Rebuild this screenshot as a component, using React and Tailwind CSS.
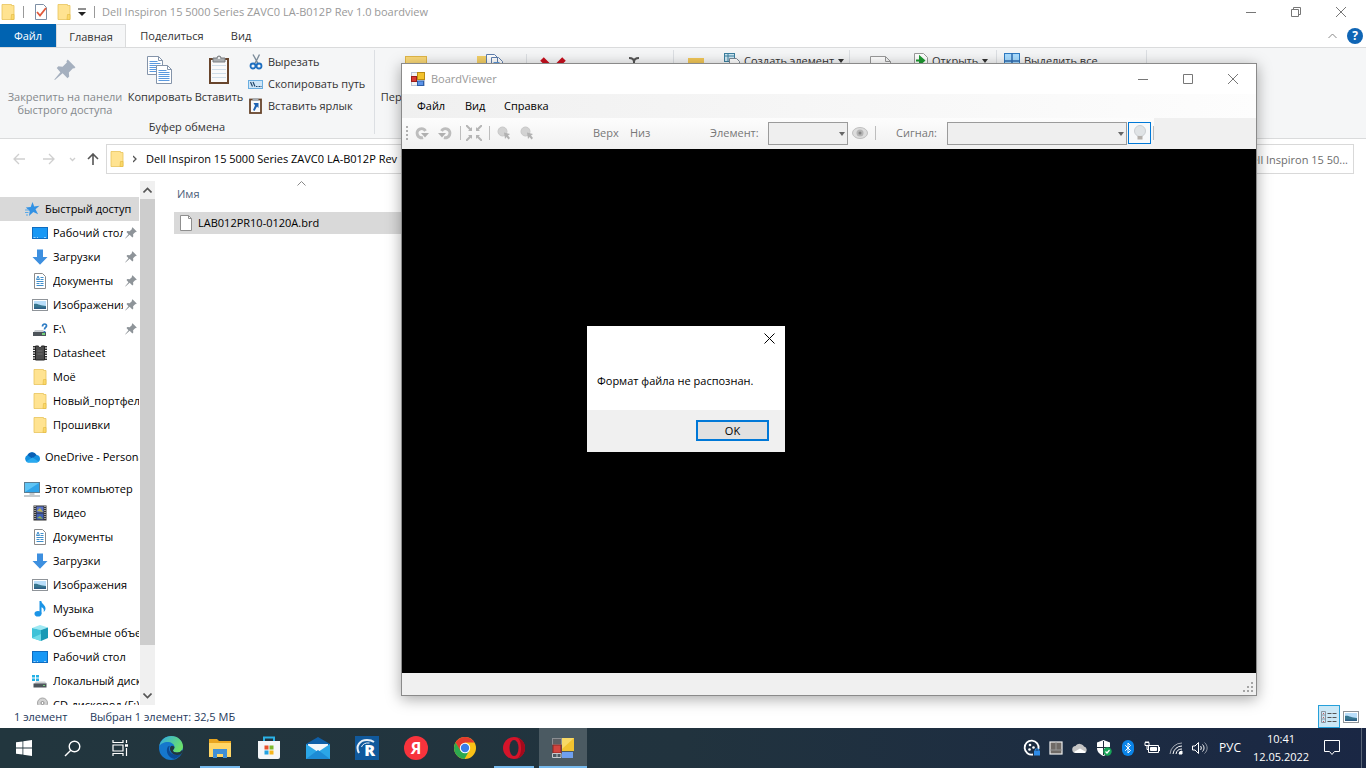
import { LuBluetooth } from "react-icons/lu";

/* ---------- file and folder icons ---------- */

const FolderIcon = () => (
  <svg width="16" height="16" viewBox="0 0 16 16">
    <path d="M2 .5h9.500v1H14v14H2z" fill="#ffe391" stroke="#e8c45c" strokeWidth=".8" />
    <path d="M11.500 10.500h2.500v5h-3z" fill="#fbd869" stroke="#e3b93f" strokeWidth=".6" />
  </svg>
);

const StarIcon = () => (
  <svg width="16" height="16" viewBox="0 0 16 16">
    <path d="M8.500 1l1.700 4.400 5.300-.6-4 3.500 2.600 5-4.800-2.300L5 15l.7-4.900-3.900-3.500 4.900-.6z" fill="#3191e4" />
    <path d="M1 9h4M1 11.500h3.500M2 14h2" stroke="#5aa9e8" strokeWidth="1" />
  </svg>
);

const DesktopIcon = () => (
  <svg width="16" height="16" viewBox="0 0 16 16">
    <rect x=".5" y="2.500" width="15" height="11" fill="#1898f5" stroke="#0f6cc0" />
    <path d="M1.500 12.500h2M5 12.500h1M12 12.500h2" stroke="#9fd0f8" />
  </svg>
);

const DownloadIcon = () => (
  <svg width="16" height="16" viewBox="0 0 16 16">
    <path d="M5 .5h6V8h4.500L8 15.800.5 8H5z" fill="#3d8fdf" />
  </svg>
);

const DocumentIcon = () => (
  <svg width="16" height="16" viewBox="0 0 16 16">
    <path d="M2.500.5h8l3 3v12h-11z" fill="#fff" stroke="#8a8a8a" />
    <path d="M8.500 4.500h3M8.500 6.500h3M4.500 8.500h7M4.500 10.500h3M8.500 10.500h3M4.500 12.500h7" stroke="#3f8ecb" />
    <path d="M4.500 6.500L6 3l1.500 3.500z" fill="none" stroke="#3f8ecb" />
  </svg>
);

const PictureIcon = () => (
  <svg width="16" height="16" viewBox="0 0 16 16">
    <rect x=".5" y="2.500" width="15" height="11" fill="#fff" stroke="#8f9499" />
    <rect x="2" y="4" width="12" height="8" fill="#b9defa" />
    <path d="M2 7c3-1 6 2 12 2v3H2z" fill="#37768f" />
    <path d="M2 10.500h12V12H2z" fill="#2d5d85" />
  </svg>
);

const UnknownDriveIcon = () => (
  <svg width="16" height="16" viewBox="0 0 16 16">
    <path d="M3 9h8l3 3H1z" fill="#c9cdd1" />
    <rect x="1" y="11" width="13" height="4" fill="#4e555b" />
    <rect x="10" y="12" width="3" height="2" fill="#74d27a" />
    <path d="M10.500 5.500c0-3.500 4.500-3 4-.5-.3 1.500-2 1.500-2 3.500M12.500 10v1.500" fill="none" stroke="#2d7cc4" strokeWidth="1.700" />
  </svg>
);

const ChipIcon = () => (
  <svg width="16" height="16" viewBox="0 0 16 16">
    <path d="M2.500 1v14M13.500 1v14" stroke="#333" strokeWidth="3" strokeDasharray="1.500 1" />
    <path d="M3.500 1h3c0 2 3 2 3 0h3v14h-9z" fill="#4c4c4c" stroke="#222" />
    <path d="M5.500 6h5M5.500 9h5" stroke="#6d6d6d" />
  </svg>
);

const CloudIcon = () => (
  <svg width="16" height="16" viewBox="0 0 16 16">
    <path d="M4 13.500a4 4 0 01-.5-7.500A5 5 0 0112.500 6a3.800 3.800 0 01.5 7.500z" fill="#1490df" />
    <path d="M3.500 6A5 5 0 0112.500 6L8 9.500z" fill="#0a5fb4" />
    <path d="M2 12.500l6.500-4 6 4a3.500 3.500 0 01-1.500 1H4a4 4 0 01-2-1z" fill="#29aaf0" />
  </svg>
);

const ComputerIcon = () => (
  <svg width="16" height="16" viewBox="0 0 16 16">
    <rect x=".5" y="1.500" width="15" height="10" fill="#5ec4f5" stroke="#5b7d92" />
    <path d="M1 11L15 2v9z" fill="#2fa4ea" />
    <path d="M5.500 13h5M0 15h16" stroke="#8c969c" />
  </svg>
);

const VideoIcon = () => (
  <svg width="16" height="16" viewBox="0 0 16 16">
    <rect x="1.500" y=".5" width="13" height="15" fill="#333" />
    <path d="M3 1v14M13 1v14" stroke="#ddd" strokeWidth="1.200" strokeDasharray="1 1" />
    <rect x="4.500" y="1.500" width="7" height="6" fill="#5b74c9" />
    <rect x="4.500" y="8.500" width="7" height="6" fill="#3f5fb5" />
    <path d="M5 6l3-3 3 4z" fill="#c2b84b" />
    <path d="M5 13l3-2 3 3z" fill="#8fb04b" />
  </svg>
);

const MusicIcon = () => (
  <svg width="16" height="16" viewBox="0 0 16 16">
    <ellipse cx="6" cy="12.800" rx="3.500" ry="2.800" fill="#1b94e6" />
    <path d="M7.500 0h1.800c.3 3 4.200 4 4.200 7.500 0 1.500-.7 2.800-1.800 3.500.7-3-.7-4.200-2.200-4.700v6.500h-2z" fill="#1b94e6" />
  </svg>
);

const CubeIcon = () => (
  <svg width="16" height="16" viewBox="0 0 16 16">
    <path d="M8 0l8 2.500L9 5 0 3z" fill="#9fe9f3" />
    <path d="M0 3l9 2v11l-9-3z" fill="#3ec2d8" />
    <path d="M0 13l9-4v7z" fill="#6fdbe8" />
    <path d="M16 2.500L9 5v11l7-3z" fill="#1899b5" />
  </svg>
);

const LocalDriveIcon = () => (
  <svg width="16" height="16" viewBox="0 0 16 16">
    <path d="M0 2h3v2.500H0zM4 2h3v2.500H4zM0 5.500h3V8H0zM4 5.500h3V8H4z" fill="#23b1e6" />
    <path d="M4 8.500h9l2 2.500H2z" fill="#c9cdd1" />
    <rect x="1.500" y="10.500" width="13" height="4" fill="#4e555b" />
    <rect x="11" y="12" width="2" height="1" fill="#74d27a" />
  </svg>
);

const DiscIcon = () => (
  <svg width="16" height="16" viewBox="0 0 16 16">
    <circle cx="10.500" cy="6" r="5" fill="#d2d2d2" stroke="#a5a5a5" />
    <circle cx="10.500" cy="6" r="1.500" fill="#fff" stroke="#8c8c8c" />
    <rect x="1" y="11" width="13" height="4" fill="#4e555b" />
  </svg>
);

const PinIcon = ({ size = 12, color = "#8e9499" }) => (
  <svg width={size} height={size} viewBox="0 0 20 20">
    <path d="M12.500.5l7 7-1.200 1.200-1-.4-3.800 3.900.3 3.800-1.500 1.500-4.500-4.500L.8 19.200l-.5-.5L5.800 12 2.500 8.200 4 6.700l3.800.4 3.900-3.900-.4-1.200z" fill={color} />
  </svg>
);

const PageIcon = () => (
  <svg width="12" height="16" viewBox="0 0 12 16">
    <path d="M.5.500h8l3 3v12H.5z" fill="#fff" stroke="#8f8f8f" />
    <path d="M8.500.5v3h3" fill="none" stroke="#8f8f8f" />
  </svg>
);

const FormIcon = () => (
  <svg width="14" height="14" viewBox="0 0 14 14">
    <rect x=".5" y=".5" width="13" height="13" fill="#f3f3f3" stroke="#b9c4d6" />
    <rect x="6.500" y=".5" width="7" height="7" fill="#f3c22c" stroke="#b98b12" />
    <rect x=".5" y="4.500" width="5" height="5" fill="#d83a34" stroke="#9c1d19" />
    <rect x="6.500" y="9" width="6" height="4.500" fill="#5d94e8" stroke="#2c5ea8" />
  </svg>
);

/* ---------- ribbon icons ---------- */

const Sheet = ({ x, y }) => (
  <g transform={`translate(${x} ${y})`}>
    <path d="M.5.5h11l4 4v14H.5z" fill="#fff" stroke="#8494aa" />
    <path d="M11.500.5v4h4" fill="none" stroke="#8494aa" />
    <path d="M2.500 5.500h8M2.500 7.500h11M2.500 9.500h11M2.500 11.500h11M2.500 13.500h11M2.500 15.500h11" stroke="#5c9adf" />
  </g>
);

const CopyIcon = () => (
  <svg width="26" height="28" viewBox="0 0 26 28">
    <Sheet x={0} y={0} />
    <Sheet x={9} y={9} />
  </svg>
);

const PasteIcon = () => (
  <svg width="22" height="30" viewBox="0 0 22 30">
    <rect x="2" y="4" width="18" height="24" fill="#fafafa" stroke="#68452c" strokeWidth="2" />
    <path d="M4 10.500h14M4 14.500h14M4 18.500h14M4 22.500h14" stroke="#cfdde8" />
    <path d="M5 7V3h4a2 2 0 014 0h4v4z" fill="#a9adb0" stroke="#7b7f82" />
    <circle cx="11" cy="3" r="1" fill="#fff" />
  </svg>
);

const CutIcon = () => (
  <svg width="16" height="16" viewBox="0 0 16 16">
    <path d="M5 .5l5 9M11.500.5L7 9.500" stroke="#7c8c9a" strokeWidth="1.400" fill="none" />
    <circle cx="5" cy="12" r="2.500" fill="none" stroke="#1f6fc0" strokeWidth="1.800" />
    <circle cx="11" cy="12" r="2.500" fill="none" stroke="#1f6fc0" strokeWidth="1.800" />
  </svg>
);

const PathIcon = () => (
  <svg width="16" height="16" viewBox="0 0 16 16">
    <rect x=".5" y="4.500" width="14" height="8" fill="#cfe6f8" stroke="#6aaee0" />
    <path d="M2.500 6l2 4.500M5 6l2 4.500M8 10.500h1.500M10.500 10.500H12M12.500 10.500h1" stroke="#24486b" strokeWidth="1.200" />
  </svg>
);

const ShortcutIcon = () => (
  <svg width="16" height="16" viewBox="0 0 16 16">
    <rect x="2" y="1.500" width="11" height="13.500" fill="#fafafa" stroke="#68452c" strokeWidth="1.800" />
    <rect x="4.500" y="0" width="6" height="3" fill="#a9adb0" />
    <path d="M5.500 5h5v5L9 8.500 6.500 13 5 12l2-4.500z" fill="#1f64b4" />
  </svg>
);

const NewItemIcon = () => (
  <svg width="16" height="16" viewBox="0 0 16 16">
    <rect x=".5" y=".5" width="10" height="8" fill="#cfe9f5" stroke="#3b7f9e" />
    <path d="M1 3h9M4 1v7" stroke="#3b7f9e" />
    <path d="M5.500 5.500h7l3 3v7h-10z" fill="#fff" stroke="#7a8794" />
  </svg>
);

const OpenIcon = () => (
  <svg width="14" height="16" viewBox="0 0 14 16">
    <path d="M.5.500h9l4 4v11H.5z" fill="#fff" stroke="#9a9a9a" />
    <path d="M2 7.500h5M6 4l4 3.500L6 11z" stroke="#1e9a32" strokeWidth="2" fill="#1e9a32" />
  </svg>
);

const SelectAllIcon = () => (
  <svg width="16" height="16" viewBox="0 0 16 16">
    <rect x=".5" y=".5" width="15" height="15" fill="#a8dcff" stroke="#2f7cc4" />
    <path d="M8 0v16M0 8h16" stroke="#2f6db4" strokeWidth="1.500" />
  </svg>
);

const CaretIcon = () => (
  <svg width="6" height="4" viewBox="0 0 6 4"><path d="M0 0h6L3 4z" fill="#333" /></svg>
);

const HelpIcon = () => (
  <span className="flex size-4 items-center justify-center rounded-full bg-[#0f65b5] text-xs font-bold text-white">?</span>
);

/* ---------- window controls ---------- */

const CaptionButtons = ({ restored = false }) => (
  <div className="flex gap-[33px] text-[#777]">
    <button aria-label="Свернуть">
      <svg width="12" height="12" viewBox="0 0 12 12"><path d="M1 6.500h10" stroke="currentColor" /></svg>
    </button>
    <button aria-label="Развернуть">
      <svg width="12" height="12" viewBox="0 0 12 12" fill="none" stroke="currentColor">
        {restored ? <path d="M1.500 3.500h7v7h-7zM3.500 3.500v-2h7v7h-2" /> : <path d="M1.500 1.500h9v9h-9z" />}
      </svg>
    </button>
    <button aria-label="Закрыть">
      <svg width="12" height="12" viewBox="0 0 12 12"><path d="M1 1l10 10M11 1L1 11" stroke="currentColor" /></svg>
    </button>
  </div>
);

/* ---------- explorer ---------- */

const quickAccess = [
  { icon: <DesktopIcon />, label: "Рабочий стол", pinned: true },
  { icon: <DownloadIcon />, label: "Загрузки", pinned: true },
  { icon: <DocumentIcon />, label: "Документы", pinned: true },
  { icon: <PictureIcon />, label: "Изображения", pinned: true },
  { icon: <UnknownDriveIcon />, label: "F:\\", pinned: true },
  { icon: <ChipIcon />, label: "Datasheet" },
  { icon: <FolderIcon />, label: "Моё" },
  { icon: <FolderIcon />, label: "Новый_портфель" },
  { icon: <FolderIcon />, label: "Прошивки" },
];

const thisPc = [
  { icon: <VideoIcon />, label: "Видео" },
  { icon: <DocumentIcon />, label: "Документы" },
  { icon: <DownloadIcon />, label: "Загрузки" },
  { icon: <PictureIcon />, label: "Изображения" },
  { icon: <MusicIcon />, label: "Музыка" },
  { icon: <CubeIcon />, label: "Объемные объекты" },
  { icon: <DesktopIcon />, label: "Рабочий стол" },
  { icon: <LocalDriveIcon />, label: "Локальный диск" },
  { icon: <DiscIcon />, label: "CD-дисковод (F:)" },
];

const TreeItem = ({ icon, label, pinned, root, active }) => (
  <li>
    <a
      href="#"
      className={`flex h-6 items-center gap-[5px] whitespace-nowrap ${root ? "pl-6" : "pl-8"} ${active ? "bg-[#d9d9d9]" : ""}`}
    >
      <span className="shrink-0">{icon}</span>
      <span className={`flex-1 overflow-hidden ${pinned ? "-mr-[3px]" : ""}`}>{label}</span>
      {pinned && <span className="mr-[2px] shrink-0"><PinIcon /></span>}
    </a>
  </li>
);

const BigButton = ({ icon, children, className = "" }) => (
  <button className={`flex flex-col items-center leading-[13px] whitespace-nowrap ${className}`}>
    <span className="flex h-9 items-center justify-center pb-1">{icon}</span>
    <span>{children}</span>
  </button>
);

const SmallButton = ({ icon, children }) => (
  <button className="flex h-[22px] items-center gap-1 whitespace-nowrap">
    {icon}
    {children}
  </button>
);

const Group = ({ children, className = "" }) => (
  <div className={`mt-0.5 mb-1 flex border-r border-[#dcdfe3] ${className}`}>{children}</div>
);

const Ribbon = () => (
  <div className="flex h-[92px] shrink-0 border-y border-[#dadbdc] bg-[#f5f6f7] text-[#333]">
    <Group className="w-[375px] flex-col">
      <div className="flex pt-1">
        <BigButton className="w-[130px] text-[#85898d]" icon={<PinIcon size={22} color="#a5b0bf" />}>
          Закрепить на панели<br />быстрого доступа
        </BigButton>
        <BigButton className="w-[60px]" icon={<CopyIcon />}>Копировать</BigButton>
        <BigButton className="w-[58px]" icon={<PasteIcon />}>Вставить</BigButton>
        <div className="-mt-[3px]">
          <SmallButton icon={<CutIcon />}>Вырезать</SmallButton>
          <SmallButton icon={<PathIcon />}>Скопировать путь</SmallButton>
          <SmallButton icon={<ShortcutIcon />}>Вставить ярлык</SmallButton>
        </div>
      </div>
      <div className="mt-auto text-center leading-[14px]">Буфер обмена</div>
    </Group>
    <Group className="w-[299px] items-start pt-1">
      <BigButton
        className="w-[82px]"
        icon={<svg width="22" height="28"><rect x=".5" y=".5" width="21" height="27" fill="#fbd978" stroke="#e0b648" /></svg>}
      >
        Переместить
      </BigButton>
      <button className="ml-5" aria-label="Копировать в">
        <svg width="26" height="28" viewBox="0 0 26 28">
          <rect x="0" y="2" width="13" height="26" fill="#f3cf66" />
          <path d="M9.500.5h8l3 3v10h-11zM14.500 3.500h7l4 4v10h-11z" fill="#fff" stroke="#5f7fae" />
          <path d="M16.500 8.500h6M16.500 10.500h7" stroke="#5c9adf" />
        </svg>
      </button>
      <span className="ml-[23px] h-20 w-px bg-[#dcdfe3]" />
      <button className="ml-3 pt-px" aria-label="Удалить">
        <svg width="28" height="28" viewBox="0 0 28 28"><path d="M3 4l20 20M25 4L5 24" stroke="#c8101e" strokeWidth="5" /></svg>
      </button>
      <button className="ml-[62px] pt-0.5" aria-label="Переименовать">
        <svg width="10" height="28" viewBox="0 0 10 28"><path d="M0 2c3 0 5 1 5 4 0-3 2-4 5-4M5 6v20" fill="none" stroke="#555" strokeWidth="2" /></svg>
      </button>
    </Group>
    <Group className="w-[176px] items-start">
      <button className="ml-[14px] pt-2" aria-label="Новая папка">
        <svg width="16" height="28"><rect width="16" height="28" fill="#f2c758" /></svg>
      </button>
      <div className="ml-5">
        <SmallButton icon={<NewItemIcon />}>
          Создать элемент <CaretIcon />
        </SmallButton>
      </div>
    </Group>
    <Group className="w-[147px] items-start">
      <button className="ml-5 pt-[5px]" aria-label="Свойства">
        <svg width="22" height="28"><path d="M.5 1.500h15l5 5v21H.5zM15.500 1.500v5h5" fill="#fff" stroke="#999" /></svg>
      </button>
      <div className="ml-[22px]">
        <SmallButton icon={<OpenIcon />}>
          Открыть <CaretIcon />
        </SmallButton>
      </div>
    </Group>
    <Group className="w-[150px] items-start">
      <div className="ml-[7px]">
        <SmallButton icon={<SelectAllIcon />}>Выделить все</SmallButton>
      </div>
    </Group>
  </div>
);

const Explorer = () => (
  <section className="flex min-h-0 flex-1 flex-col bg-white">
    <header className="flex h-6 shrink-0 items-center pr-[19px]">
      <FolderIcon />
      <span className="ml-[7px] h-3 w-px bg-[#999]" />
      <svg className="ml-[10px]" width="14" height="16" viewBox="0 0 14 16">
        <path d="M1.500.5h8l3 3v12h-11z" fill="#fff" stroke="#7d8fa5" />
        <path d="M3 8l3 3.500L12 4" fill="none" stroke="#e0593b" strokeWidth="1.800" />
      </svg>
      <span className="ml-2"><FolderIcon /></span>
      <svg className="ml-[6px]" width="8" height="8" viewBox="0 0 8 8"><path d="M0 1h8" stroke="#222" /><path d="M0 4h8L4 8z" fill="#222" /></svg>
      <span className="ml-2 h-3 w-px bg-[#999]" />
      <h1 className="ml-[7px] flex-1 text-[#999]">Dell Inspiron 15 5000 Series ZAVC0 LA-B012P Rev 1.0 boardview</h1>
      <CaptionButtons restored />
    </header>

    <nav className="flex h-[23px] shrink-0 items-center text-[#333]">
      <button className="h-full w-14 bg-[#0063b1] text-white">Файл</button>
      <button className="-mb-px h-6 w-[70px] border border-b-0 border-[#dadbdc] bg-[#f5f6f7]">Главная</button>
      <button className="w-[92px]">Поделиться</button>
      <button className="w-[46px]">Вид</button>
      <span className="flex-1" />
      <svg width="9" height="6" viewBox="0 0 9 6"><path d="M.5 5L4.500 1l4 4" fill="none" stroke="#888" /></svg>
      <button className="mr-[3px] ml-[10px]" aria-label="Справка"><HelpIcon /></button>
    </nav>

    <Ribbon />

    <div className="flex h-[42px] shrink-0 items-center px-3 pb-[2px]">
      <svg width="90" height="12" viewBox="0 0 90 12" fill="none" strokeWidth="1.300">
        <path d="M13 6H2M7 1L2 6l5 5M31 6h11M37 1l5 5-5 5M58 5l2.500 2.500L63 5" stroke="#cfcfcf" />
        <path d="M81 12V1M76 6l5-5 5 5" stroke="#555" strokeWidth="1.600" />
      </svg>
      <div className="ml-1 flex h-[30px] flex-1 items-center border border-[#d9d9d9] pl-[2px]">
        <FolderIcon />
        <svg className="mr-[9px] ml-2" width="4" height="8" viewBox="0 0 4 8"><path d="M0 1l3 3-3 3" fill="none" stroke="#555" strokeWidth="1.300" /></svg>
        <span className="text-black">Dell Inspiron 15 5000 Series ZAVC0 LA-B012P Rev 1.0 boardview</span>
      </div>
      <input
        aria-label="Поиск"
        placeholder="Поиск: Dell Inspiron 15 50..."
        className="ml-3 h-[30px] w-[210px] border border-[#d9d9d9] pr-[5px] text-right placeholder:text-[#6d6d6d]"
      />
    </div>

    <div className="flex min-h-0 flex-1 text-black">
      <ul className="w-[139px] overflow-hidden pt-4">
        <TreeItem root active icon={<StarIcon />} label="Быстрый доступ" />
        {quickAccess.map((item) => <TreeItem key={item.label} {...item} />)}
        <li className="h-2" />
        <TreeItem root icon={<CloudIcon />} label="OneDrive - Personal" />
        <li className="h-2" />
        <TreeItem root icon={<ComputerIcon />} label="Этот компьютер" />
        {thisPc.map((item) => <TreeItem key={item.label} {...item} />)}
      </ul>
      <div className="ml-px flex w-[15px] flex-col items-center bg-[#f0f0f0]">
        <svg className="my-[6px]" width="9" height="6" viewBox="0 0 9 6"><path d="M.5 5.500l4-4 4 4" fill="none" stroke="#555" strokeWidth="1.600" /></svg>
        <div className="w-full flex-[449] bg-[#cdcdcd]" />
        <div className="flex-[42]" />
        <svg className="my-[6px]" width="9" height="6" viewBox="0 0 9 6"><path d="M.5.5l4 4 4-4" fill="none" stroke="#555" strokeWidth="1.600" /></svg>
      </div>
      <div className="flex-1 pl-[19px]">
        <div className="h-[31px] w-[255px] text-center">
          <svg className="mx-auto block" width="9" height="5" viewBox="0 0 9 5"><path d="M.5 4.500l4-4 4 4" fill="none" stroke="#888" /></svg>
          <div className="pl-[3px] text-left leading-4 text-[#4c607a]">Имя</div>
        </div>
        <a href="#" className="flex h-[22px] w-[640px] items-center gap-[6px] bg-[#d9d9d9] pl-[6px]">
          <PageIcon />
          LAB012PR10-0120A.brd
        </a>
      </div>
    </div>

    <footer className="flex h-[23px] shrink-0 items-center pr-[7px] pl-[14px] text-[#1e395b]">
      <span className="w-[76px]">1 элемент</span>
      <span className="flex-1">Выбран 1 элемент: 32,5 МБ</span>
      <button className="flex h-[23px] w-[22px] items-center justify-center border border-[#26a0da] bg-[#cbe8f6]" aria-label="Таблица">
        <svg width="16" height="12" viewBox="0 0 16 12" fill="none">
          <path d="M.5.5h4v11h-4zM.5 4h4M.5 8h4" stroke="#8a96a0" />
          <path d="M6.500 2.500h4M11.500 2.500h4M6.500 6.500h4M11.500 6.500h4M6.500 10.500h4M11.500 10.500h4" stroke="#555" />
          <path d="M2 2.500h1M2 6.500h1M2 10.500h1" stroke="#c55" />
        </svg>
      </button>
      <button className="ml-[3px]" aria-label="Крупные значки"><PictureIcon /></button>
    </footer>
  </section>
);

/* ---------- BoardViewer ---------- */

const RotateIcon = ({ flip }) => (
  <svg width="14" height="14" viewBox="0 0 14 14">
    <g transform={flip ? "translate(14 0) scale(-1 1)" : undefined}>
      <path d="M8 11.500A4.500 4.500 0 1110.500 5" fill="none" stroke="#bdbdbd" strokeWidth="3" />
      <path d="M6 7h8l-4 4.500z" fill="#b0b0b0" />
    </g>
  </svg>
);

const ZoomIcon = () => (
  <svg width="14" height="14" viewBox="0 0 14 14">
    <circle cx="5.500" cy="5.500" r="4.500" fill="#d2d2d2" stroke="#c8c8c8" />
    <path d="M7 6.500l6 1.500-2 1.500 2 2.500-1.500 1.500-2-2.500L8 13z" fill="#b2b2b2" />
  </svg>
);

const Combo = ({ label, id, labelClass, className }) => (
  <>
    <label htmlFor={id} className={labelClass}>{label}</label>
    <div className={`relative ${className}`}>
      <select id={id} disabled className="block h-[23px] w-full appearance-none border border-[#9b9b9b] bg-[#efefef]" />
      <svg className="pointer-events-none absolute top-[10px] right-[3px]" width="6" height="4"><path d="M0 0h6L3 4z" fill="#666" /></svg>
    </div>
  </>
);

const Divider = ({ className = "" }) => <span className={`h-[14px] w-px bg-[#bdbdbd] ${className}`} />;

const BoardViewer = () => (
  <section className="absolute top-[63px] left-[401px] flex h-[633px] w-[856px] flex-col border border-[#8a8a8a] bg-white shadow-[0_3px_14px_rgba(0,0,0,0.35)]">
    <header className="flex h-[30px] shrink-0 items-center pr-[17px] pl-[9px]">
      <FormIcon />
      <h2 className="ml-[6px] flex-1 text-[#999]">BoardViewer</h2>
      <CaptionButtons />
    </header>
    <nav className="flex h-6 shrink-0 items-center bg-linear-to-r from-[#f0f0f0] to-[#fdfdfd] pl-[15px] text-black">
      <button className="w-12 text-left">Файл</button>
      <button className="w-[39px] text-left">Вид</button>
      <button>Справка</button>
    </nav>
    <div className="flex h-[31px] shrink-0 bg-[#f0f0f0] text-[#777]">
      <div className="flex h-full w-[752px] items-center bg-linear-to-b from-[#fdfdfd] to-[#f0f0f0] pb-px pl-1">
        <svg width="2" height="14"><path d="M1 0v14" stroke="#b0b0b0" strokeWidth="2" strokeDasharray="2 2" /></svg>
        <button className="ml-[7px]" aria-label="Повернуть влево"><RotateIcon /></button>
        <button className="ml-[9px]" aria-label="Повернуть вправо"><RotateIcon flip /></button>
        <Divider className="ml-2" />
        <button className="ml-[5px]" aria-label="Вписать">
          <svg width="16" height="16" viewBox="0 0 16 16">
            <path d="M0 0l5 5M16 0l-5 5M0 16l5-5M16 16l-5-5" stroke="#b5b5b5" strokeWidth="2" />
            <path d="M6 2v4H2zM10 2v4h4zM6 14v-4H2zM10 14v-4h4z" fill="#b5b5b5" />
          </svg>
        </button>
        <Divider className="ml-[7px]" />
        <button className="ml-[7px]" aria-label="Увеличить"><ZoomIcon /></button>
        <button className="ml-[9px]" aria-label="Уменьшить"><ZoomIcon /></button>
        <button className="ml-[59px] w-[37px] text-left">Верх</button>
        <button className="w-20 text-left">Низ</button>
        <Combo id="element" label="Элемент:" labelClass="w-[58px] shrink-0" className="w-20" />
        <button className="ml-1" aria-label="Показать">
          <svg width="16" height="12" viewBox="0 0 16 12">
            <ellipse cx="8" cy="6" rx="7.500" ry="5.500" fill="#dcdcdc" stroke="#bfbfbf" />
            <circle cx="8" cy="6" r="3.500" fill="#b5b5b5" />
            <circle cx="8" cy="6" r="1.500" fill="#858585" />
          </svg>
        </button>
        <Divider className="ml-[7px]" />
        <Combo id="signal" label="Сигнал:" labelClass="ml-5 w-[51px] shrink-0" className="w-[180px]" />
        <button className="ml-px flex h-[22px] w-[23px] items-center justify-center border border-[#0078d7] bg-[#f6f8fa]" aria-label="Подсветка">
          <svg width="14" height="16" viewBox="0 0 14 16">
            <circle cx="7" cy="6" r="5.500" fill="#dfe3e6" stroke="#cbcfd3" />
            <path d="M4.500 11h5v3.500h-5z" fill="#b4b0ac" />
          </svg>
        </button>
        <Divider className="ml-[2px]" />
      </div>
    </div>
    <main className="flex-1 bg-black" />
    <footer className="flex h-[22px] shrink-0 items-end justify-end bg-[#f0f0f0] p-[3px]">
      <svg width="10" height="10" fill="#a5a5a5"><path d="M8 0h2v2H8zM4 4h2v2H4zM8 4h2v2H8zM0 8h2v2H0zM4 8h2v2H4zM8 8h2v2H8z" /></svg>
    </footer>
  </section>
);

const ErrorDialog = () => (
  <div role="alertdialog" className="absolute top-[326px] left-[587px] flex h-[126px] w-[198px] flex-col bg-white text-black">
    <button className="mt-[7px] mr-[10px] self-end" aria-label="Закрыть">
      <svg width="11" height="11" viewBox="0 0 11 11"><path d="M.5.5l10 10M10.500.5l-10 10" stroke="#000" /></svg>
    </button>
    <p className="mt-[29px] pl-[10px] whitespace-nowrap">Формат файла не распознан.</p>
    <div className="mt-auto flex h-[42px] items-center justify-end bg-[#f0f0f0] pr-4 pb-px">
      <button className="h-[21px] w-[73px] border-2 border-[#0078d7] bg-[#e1e1e1]">OK</button>
    </div>
  </div>
);

/* ---------- taskbar ---------- */

const StartIcon = () => (
  <svg width="16" height="16" viewBox="0 0 16 16" fill="#fff">
    <path d="M0 2.300l6.500-.9v6.100H0zM7.300 1.300L16 0v7.500H7.300zM0 8.400h6.500v6.200L0 13.700zM7.300 8.400H16V16l-8.700-1.200z" />
  </svg>
);

const SearchIcon = () => (
  <svg width="17" height="17" viewBox="0 0 17 17" fill="none" stroke="#fff" strokeWidth="1.400">
    <circle cx="10.500" cy="6.500" r="5.300" />
    <path d="M6.800 10.300L1 16" />
  </svg>
);

const TaskViewIcon = () => (
  <svg width="17" height="16" viewBox="0 0 17 16" fill="none" stroke="#fff" strokeWidth="1.200">
    <path d="M1 0v2.500h10V0M1 5h10v6H1zM1 16v-2.500h10V16M14.500 0v3M14.500 8v8" />
    <path d="M13 5.500h3" strokeWidth="2.500" />
  </svg>
);

const EdgeIcon = () => (
  <svg width="24" height="24" viewBox="0 0 24 24">
    <defs>
      <linearGradient id="edgeTop" x1="0" y1="0" x2="1" y2="0.500">
        <stop offset="0" stopColor="#2fa9e8" />
        <stop offset="1" stopColor="#6be06a" />
      </linearGradient>
    </defs>
    <circle cx="12" cy="12" r="12" fill="#1577cc" />
    <path d="M.3 10C1.500 4 6.500 0 12.300 0 19 0 24 5 24 10.500c0 4-3 6-6 6-2.500 0-4-1-4-2s1.500-1.500 1.500-3.500C15.500 8 12 6 8.500 6S1.500 8 .3 10z" fill="url(#edgeTop)" />
    <path d="M9 10.500c-3 4 0 11.500 6.500 12.500 3-1 5.500-3 6.800-5.500-6 3-12.500 0-12.300-5 0-1 .3-2 1-2.800z" fill="#0b4a94" />
    <path d="M15.500 11c0 2-1.500 2.500-1.500 3.500s1.500 2 4 2c2 0 4-.8 5-2.500l1 1c-1 3-3 4-6 4-4 0-7-3-7-6.500 0-2 2-4 4.500-1.500z" fill="#22363e" />
  </svg>
);

const TaskFolderIcon = () => (
  <svg width="22" height="20" viewBox="0 0 22 20">
    <path d="M0 1h8l2 2h12v16H0z" fill="#e9a51f" />
    <path d="M0 5h22v14H0z" fill="#ffd667" />
    <path d="M4 11h14v9h-4v-4H8v4H4z" fill="#3f8fd6" />
  </svg>
);

const StoreIcon = () => (
  <svg width="24" height="24" viewBox="0 0 24 24">
    <path d="M7 6V1.500h10V6" fill="none" stroke="#2bb2e6" strokeWidth="2" />
    <path d="M1 5h22v16a2 2 0 01-2 2H3a2 2 0 01-2-2z" fill="#f4f6f8" />
    <path d="M7.500 9.500h4v4h-4z" fill="#e8502a" /><path d="M12.500 9.500h4v4h-4z" fill="#7cb82b" />
    <path d="M7.500 14.500h4v4h-4z" fill="#22a2e3" /><path d="M12.500 14.500h4v4h-4z" fill="#f6b61b" />
  </svg>
);

const MailIcon = () => (
  <svg width="24" height="22" viewBox="0 0 24 22">
    <path d="M12 0l12 7v3H0V7z" fill="#0f5fa8" />
    <path d="M2 7h20v8H2z" fill="#f2f6fa" />
    <path d="M0 7l12 8 12-8v15H0z" fill="#2ba6e6" />
    <path d="M0 22l12-9 12 9z" fill="#1d8bd4" />
  </svg>
);

const RStudioIcon = () => (
  <span className="relative flex size-6 items-end justify-end bg-[#10599c] pr-1 text-base leading-5 font-extrabold text-white">
    R
    <svg className="absolute inset-0" width="24" height="24" viewBox="0 0 24 24" fill="none" stroke="#e8f0f8">
      <path d="M4 17C0 10 5 4 12 4c3 0 5 .5 7 2" strokeWidth="2" />
      <path d="M6.500 11c1-3 4-4.500 8-4" strokeWidth="1" />
    </svg>
  </span>
);

const ChromeIcon = () => (
  <svg width="22" height="22" viewBox="0 0 22 22">
    <circle cx="11" cy="11" r="11" fill="#fbc116" />
    <path d="M1.500 5.500A11 11 0 0120.500 5.500H11L6 14z" fill="#e33b2e" />
    <path d="M1.500 5.500A11 11 0 0010.500 22L15 14 6.500 13.800z" fill="#2da94f" />
    <circle cx="11" cy="11" r="5.200" fill="#fff" />
    <circle cx="11" cy="11" r="4.200" fill="#3a7de8" />
  </svg>
);

const OperaIcon = () => (
  <svg width="22" height="22" viewBox="0 0 22 22">
    <ellipse cx="11" cy="11" rx="11" ry="11" fill="#d5142a" />
    <path d="M14 .4A11 11 0 0114 21.600c3-2 4-6 4-10.600S17 2.400 14 .4z" fill="#a30a1c" />
    <ellipse cx="11" cy="11" rx="4.500" ry="8" fill="#20323c" />
  </svg>
);

const TaskFormIcon = () => (
  <svg width="22" height="20" viewBox="0 0 22 20">
    <rect x=".5" y=".5" width="9" height="6" fill="#5c5f63" stroke="#8b8e92" />
    <rect x="1" y="7" width="8" height="8" fill="#d2453f" stroke="#8f2723" />
    <rect x="10" y="0" width="12" height="13" fill="#f2c230" />
    <path d="M10 0h12L10 11z" fill="#f8d866" />
    <rect x="10" y="14" width="11" height="6" fill="#6f9fee" />
    <path d="M.5 15.500h8.500v4H.5zM5 15.500v4" fill="none" stroke="#c5c9cd" />
  </svg>
);

const TaskButton = ({ icon, label, open, active }) => (
  <button aria-label={label} className={`relative flex h-10 w-12 items-center justify-center ${active ? "bg-[#4b5a62]" : ""}`}>
    {icon}
    {(open || active) && (
      <span className={`absolute bottom-0 h-[2px] bg-[#76b9ed] ${active ? "inset-x-0" : "inset-x-1"}`} />
    )}
  </button>
);

const tray = [
  <svg width="18" height="18" viewBox="0 0 18 18">
    <path d="M10 15.500A7 7 0 1115.500 10" fill="none" stroke="#fff" strokeWidth="1.800" />
    <circle cx="7" cy="6" r="1.300" fill="#fff" /><circle cx="10.500" cy="8.500" r="1.300" fill="#fff" /><circle cx="6.500" cy="10.500" r="1.300" fill="#fff" />
    <rect x="11" y="11.500" width="6" height="5" fill="#2f8be6" />
    <path d="M12.500 11.500v-1.500h3v1.500" fill="none" stroke="#2f8be6" />
  </svg>,
  <svg width="14" height="14" viewBox="0 0 14 14">
    <rect x="1" y="1" width="12" height="12" fill="#6f6a66" stroke="#eee" strokeWidth="1.200" />
    <path d="M1 9h12M7 1v8" stroke="#999" />
  </svg>,
  <svg width="16" height="12" viewBox="0 0 16 12">
    <path d="M4 11a3.500 3.500 0 01-.5-7A5 5 0 0112 4.500a3.400 3.400 0 01.5 6.500z" fill="#c4c4c4" />
    <path d="M2 10l6-3.500 6 3.500a3 3 0 01-1.500 1H4a3 3 0 01-2-1z" fill="#fff" />
  </svg>,
  <svg width="16" height="16" viewBox="0 0 16 16">
    <path d="M7.500 0l6.500 2.500V8c0 4-3 6.500-6.500 8C4 14.500 1 12 1 8V2.500z" fill="#fff" />
    <path d="M7.500 1v14M1 7.500h13" stroke="#22303f" />
    <circle cx="11.500" cy="11.500" r="4.200" fill="#18a558" />
    <path d="M9.500 11.500l1.500 1.500 2.500-3" fill="none" stroke="#fff" strokeWidth="1.200" />
  </svg>,
  <span className="flex h-4 w-3 items-center justify-center rounded-full bg-[#0a84e8] text-white"><LuBluetooth size={12} /></span>,
  <svg width="17" height="14" viewBox="0 0 17 14" fill="none" stroke="#fff">
    <path d="M1 1.500h4v3H1zM2 0v1.500M4 0v1.500M3 4.500V8.500h1.500" />
    <path d="M4.500 4.500h10v7h-10zM15.500 6v4" />
    <path d="M6.500 6.500h6v3h-6z" fill="#fff" />
  </svg>,
  <svg width="14" height="14" viewBox="0 0 14 14" fill="none" stroke="#fff">
    <path d="M1 13A12 12 0 0113 2" opacity=".6" />
    <path d="M4 13a9 9 0 019-8M7 13a6 6 0 016-5" />
    <path d="M10 13a3 3 0 013-3v3z" fill="#fff" />
  </svg>,
  <svg width="17" height="14" viewBox="0 0 17 14" fill="none" stroke="#fff">
    <path d="M.5 5v4h2.500l3.500 3.500v-11L3 5zM8.500 5c1 1 1 3 0 4M10.500 3.500c2 2 2 5 0 7" />
    <path d="M12.500 1.500c3.500 3 3.500 8 0 11" opacity=".5" />
  </svg>,
];

const Taskbar = () => (
  <footer className="flex h-10 shrink-0 items-center bg-linear-to-r from-[#22363e] via-[#21333e] to-[#1a2744] text-white">
    <TaskButton label="Пуск" icon={<StartIcon />} />
    <TaskButton label="Поиск" icon={<SearchIcon />} />
    <TaskButton label="Представление задач" icon={<TaskViewIcon />} />
    <div className="ml-[3px] flex gap-px">
      <TaskButton label="Edge" icon={<EdgeIcon />} />
      <TaskButton label="Проводник" icon={<TaskFolderIcon />} open />
      <TaskButton label="Store" icon={<StoreIcon />} />
      <TaskButton label="Почта" icon={<MailIcon />} />
      <TaskButton label="R-Studio" icon={<RStudioIcon />} />
      <TaskButton
        label="Яндекс"
        icon={<span className="flex size-6 items-center justify-center rounded-full bg-[#f8333c] text-base font-bold">Я</span>}
      />
      <TaskButton label="Chrome" icon={<ChromeIcon />} />
      <TaskButton label="Opera" icon={<OperaIcon />} open />
      <TaskButton label="BoardViewer" icon={<TaskFormIcon />} active />
    </div>
    <div className="ml-auto flex items-center">
      {tray.map((icon, i) => (
        <span key={i} className="flex w-6 items-center justify-center">{icon}</span>
      ))}
      <button className="w-9 text-center text-xs">РУС</button>
      <div className="w-[66px] text-center leading-[18px]">
        10:41
        <br />
        12.05.2022
      </div>
      <button className="flex w-9 justify-center" aria-label="Уведомления">
        <svg width="16" height="16" viewBox="0 0 16 16" fill="none" stroke="#fff">
          <path d="M.5.5h15v11h-5L8 14.500 5.500 11.500h-5z" />
        </svg>
      </button>
      <span className="ml-[11px] h-10 w-[5px] border-l border-[#5a6678]" />
    </div>
  </footer>
);

export default function App() {
  return (
    <div className="relative flex h-screen flex-col overflow-hidden font-['Open_Sans','Noto_Sans',sans-serif] text-[11px] leading-4">
      <Explorer />
      <BoardViewer />
      <ErrorDialog />
      <Taskbar />
    </div>
  );
}
